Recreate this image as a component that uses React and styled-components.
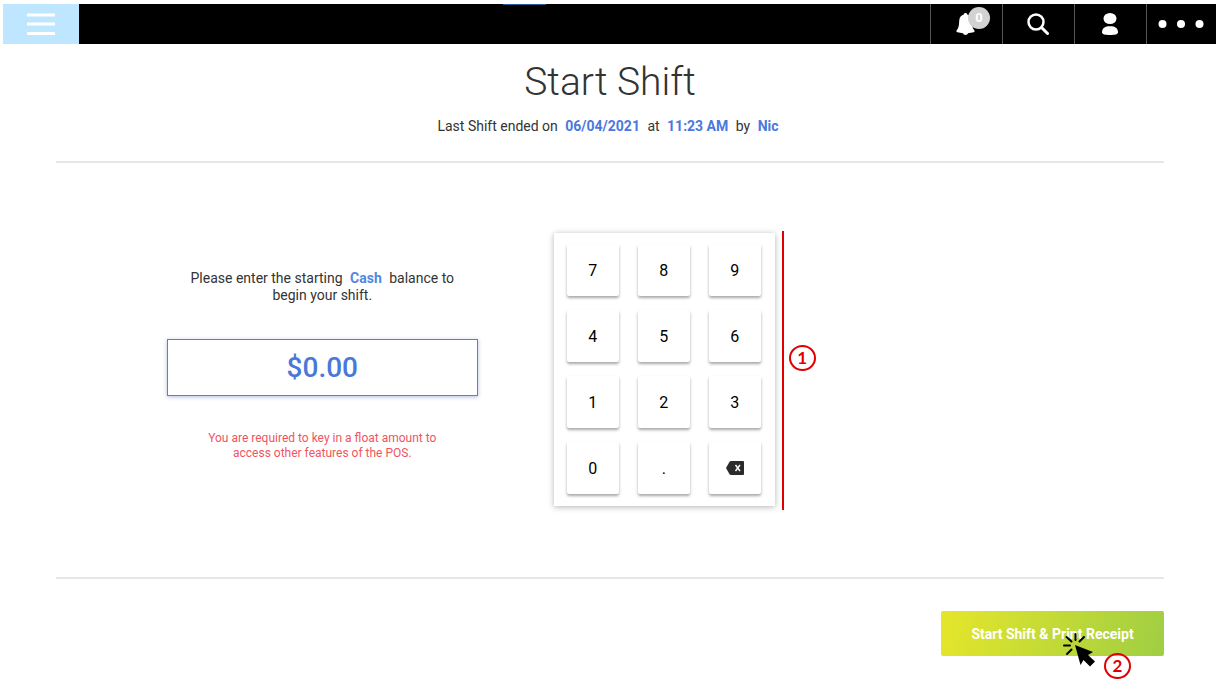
import React, { useState } from "react";
import styled, { createGlobalStyle } from "styled-components";

const GlobalStyle = createGlobalStyle`
  * {
    box-sizing: border-box;
  }

  body {
    margin: 0;
    background: #fff;
    color: #333;
    font-family: Roboto, "Liberation Sans", sans-serif;
  }

  button,
  input {
    font-family: inherit;
  }
`;

const Page = styled.div`
  min-height: 100vh;
  padding: 4px 0 0 3px;
`;

/* ---------- top bar ---------- */

const TopBar = styled.header`
  position: relative;
  display: flex;
  justify-content: space-between;
  height: 40px;
  background: #000;
`;

const TopAccent = styled.span`
  position: absolute;
  top: 0;
  left: 500px;
  width: 43px;
  height: 1px;
  background: #1c5a9c;
`;

const MenuButton = styled.button`
  display: flex;
  align-items: center;
  justify-content: center;
  width: 76px;
  padding: 0;
  border: 0;
  background: #bfe6ff;
  cursor: pointer;
`;

const TopActions = styled.nav`
  display: flex;
`;

const TopButton = styled.button`
  display: flex;
  align-items: center;
  justify-content: center;
  width: ${(props) => props.$width || 72}px;
  padding: 0 2px 0 0;
  border: 0;
  border-left: 1px solid #555;
  background: transparent;
  cursor: pointer;
`;

const BellWrap = styled.span`
  position: relative;
  display: flex;
`;

const Count = styled.span`
  position: absolute;
  top: -6px;
  right: -15px;
  width: 22px;
  height: 22px;
  border-radius: 50%;
  background: #d2d2d2;
  color: #fff;
  font-size: 13px;
  font-weight: 700;
  line-height: 22px;
  text-align: center;
`;

/* ---------- content ---------- */

const Main = styled.main`
  padding: 0 52px 0 53px;
`;

const Heading = styled.div`
  padding: 13px 0 26px;
  border-bottom: 2px solid #e6e6e6;
  text-align: center;
`;

const Title = styled.h1`
  margin: 0;
  font-size: 39px;
  font-weight: 300;
  line-height: 50px;
`;

const LastShift = styled.p`
  margin: 10px 0 0;
  font-size: 14px;
  line-height: 18px;
`;

const Strong = styled.b`
  margin: 0 4px;
  color: ${(props) => props.$color || "#4a78e0"};
  font-weight: 700;
`;

const Body = styled.section`
  display: flex;
  align-items: flex-start;
  gap: 76px;
  padding: 70px 0 71px 10%;
  border-bottom: 2px solid #e6e6e6;
`;

const CashForm = styled.div`
  width: 311px;
  padding-top: 37px;
  text-align: center;
`;

const Prompt = styled.label`
  display: block;
  padding: 0 20px;
  font-size: 14px;
  line-height: 17px;
`;

const Amount = styled.input`
  display: block;
  width: 100%;
  height: 57px;
  margin: 35px 0;
  padding: 0;
  border: 1px solid #5b7fd6;
  background: #fff;
  box-shadow: 0 1px 4px rgba(60, 90, 180, 0.4);
  color: #4a78d8;
  font-size: 28px;
  font-weight: 500;
  text-align: center;
  outline: none;
`;

const Warning = styled.p`
  margin: 0;
  padding: 0 30px;
  color: #f0555f;
  font-size: 12px;
  line-height: 15px;
`;

const KeypadArea = styled.div`
  position: relative;
`;

const Keypad = styled.div`
  display: grid;
  grid-template-columns: repeat(3, 52px);
  gap: 14px 19px;
  padding: 11px 14px 12px 13px;
  background: #fff;
  box-shadow: 0 1px 6px rgba(0, 0, 0, 0.3);
`;

const Key = styled.button`
  display: flex;
  align-items: center;
  justify-content: center;
  height: 52px;
  padding: 0;
  border: 0;
  border-radius: 2px;
  background: #fff;
  box-shadow: 0 2px 3px rgba(0, 0, 0, 0.35);
  color: #000;
  font-size: 16px;
  font-weight: 400;
  cursor: pointer;
`;

/* ---------- guide marks ---------- */

const Bracket = styled.span`
  position: absolute;
  top: -2px;
  bottom: -4px;
  left: calc(100% + 7px);
  width: 2px;
  background: #e00000;
`;

const Step = styled.span`
  position: absolute;
  top: ${(props) => props.$top};
  left: ${(props) => props.$left};
  width: 27px;
  height: 26px;
  border: 2px solid #e00000;
  border-radius: 50%;
  color: #e00000;
  font-family: Lato, "Open Sans", sans-serif;
  font-size: 17px;
  font-weight: 700;
  line-height: 22px;
  text-align: center;
`;

const Footer = styled.footer`
  display: flex;
  justify-content: flex-end;
  padding: 32px 0;
`;

const SubmitArea = styled.div`
  position: relative;
`;

const SubmitButton = styled.button`
  display: block;
  width: 223px;
  height: 45px;
  padding: 0;
  border: 0;
  border-radius: 2px;
  background: linear-gradient(105deg, #e6e62a, #9fce43);
  color: #fff;
  font-size: 14px;
  font-weight: 700;
  cursor: pointer;
`;

const Pointer = styled.svg`
  position: absolute;
  top: 21px;
  left: 121px;
  pointer-events: none;
`;

const keys = ["7", "8", "9", "4", "5", "6", "1", "2", "3", "0", "."];

function App() {
  const [value, setValue] = useState("");

  const amount = "$" + (Number(value) || 0).toFixed(2);

  return (
    <Page>
      <GlobalStyle />
      <TopBar>
        <TopAccent />
        <MenuButton aria-label="Menu">
          <svg width="28" height="22" viewBox="0 0 28 22" stroke="#fff" strokeWidth="3">
            <path d="M0 2h28M0 11h28M0 20.500h28" />
          </svg>
        </MenuButton>
        <TopActions>
          <TopButton aria-label="Notifications">
            <BellWrap>
              <svg width="19" height="22" viewBox="0 0 19 22" fill="#fff">
                <path d="M9.500 0C10.500 0 11.200 .7 11.200 1.600C14.200 2.400 15.700 4.800 15.800 8C15.900 13 16.600 15.500 18.300 17.200C18.800 17.900 18.600 19 17.600 19.300L12 20.300C11.600 21.400 10.700 22 9.500 22S7.400 21.400 7 20.300L1.400 19.300C.4 19 .2 17.900 .7 17.200C2.400 15.500 3.100 13 3.200 8C3.300 4.800 4.800 2.400 7.800 1.600C7.800 .7 8.500 0 9.500 0Z" />
              </svg>
              <Count>0</Count>
            </BellWrap>
          </TopButton>
          <TopButton aria-label="Search">
            <svg width="22" height="22" viewBox="0 0 22 22" fill="none" stroke="#fff">
              <circle cx="9" cy="9" r="7.500" strokeWidth="2.500" />
              <path d="M14.500 14.500L20.500 20.500" strokeWidth="3" strokeLinecap="round" />
            </svg>
          </TopButton>
          <TopButton aria-label="Account">
            <svg width="16" height="22" viewBox="0 0 16 22" fill="#fff">
              <ellipse cx="8" cy="5.500" rx="6.500" ry="5.500" />
              <path d="M0 19.500C0 15 3 13.200 8 13.200S16 15 16 19.500C16 21.200 13 22 8 22S0 21.200 0 19.500Z" />
            </svg>
          </TopButton>
          <TopButton aria-label="More" $width={70}>
            <svg width="46" height="8" viewBox="0 0 46 8" fill="#fff">
              <circle cx="4.500" cy="4" r="4" />
              <circle cx="23" cy="4" r="4" />
              <circle cx="41.500" cy="4" r="4" />
            </svg>
          </TopButton>
        </TopActions>
      </TopBar>

      <Main>
        <Heading>
          <Title>Start Shift</Title>
          <LastShift>
            Last Shift ended on <Strong>06/04/2021</Strong> at <Strong>11:23 AM</Strong> by{" "}
            <Strong>Nic</Strong>
          </LastShift>
        </Heading>

        <Body>
          <CashForm>
            <Prompt htmlFor="cash">
              Please enter the starting <Strong $color="#5088e0">Cash</Strong> balance to begin your shift.
            </Prompt>
            <Amount id="cash" value={amount} readOnly />
            <Warning>You are required to key in a float amount to access other features of the POS.</Warning>
          </CashForm>

          <KeypadArea>
            <Keypad>
              {keys.map((key) => (
                <Key key={key} onClick={() => setValue(value + key)}>
                  {key}
                </Key>
              ))}
              <Key aria-label="Delete" onClick={() => setValue(value.slice(0, -1))}>
                <svg width="18" height="14" viewBox="0 0 18 14">
                  <path d="M5 0H17Q18 0 18 1V13Q18 14 17 14H5Q4 14 3.400 13L0 7L3.400 1Q4 0 5 0Z" fill="#2b2b2b" />
                  <path d="M9.500 4L14 10M14 4L9.500 10" stroke="#fff" strokeWidth="1.400" />
                </svg>
              </Key>
            </Keypad>
            <Bracket />
            <Step $top="calc(50% - 25px)" $left="calc(100% + 14px)">1</Step>
          </KeypadArea>
        </Body>

        <Footer>
          <SubmitArea>
            <SubmitButton>Start Shift &amp; Print Receipt</SubmitButton>
            <Pointer width="34" height="36" viewBox="0 0 34 36">
              <path
                d="M2 13.500H8M4.500 5L9.500 9.500M13.500 2V8M22 5L17.500 9.500M5 22L9.500 17.500"
                stroke="#000"
                strokeWidth="2"
                strokeLinecap="round"
              />
              <path d="M13 13L31 20L26 23L33 29.500L28 34.500L21.500 28L18.500 33Z" fill="#000" />
            </Pointer>
            <Step $top="42px" $left="163px">2</Step>
          </SubmitArea>
        </Footer>
      </Main>
    </Page>
  );
}

export default App;
